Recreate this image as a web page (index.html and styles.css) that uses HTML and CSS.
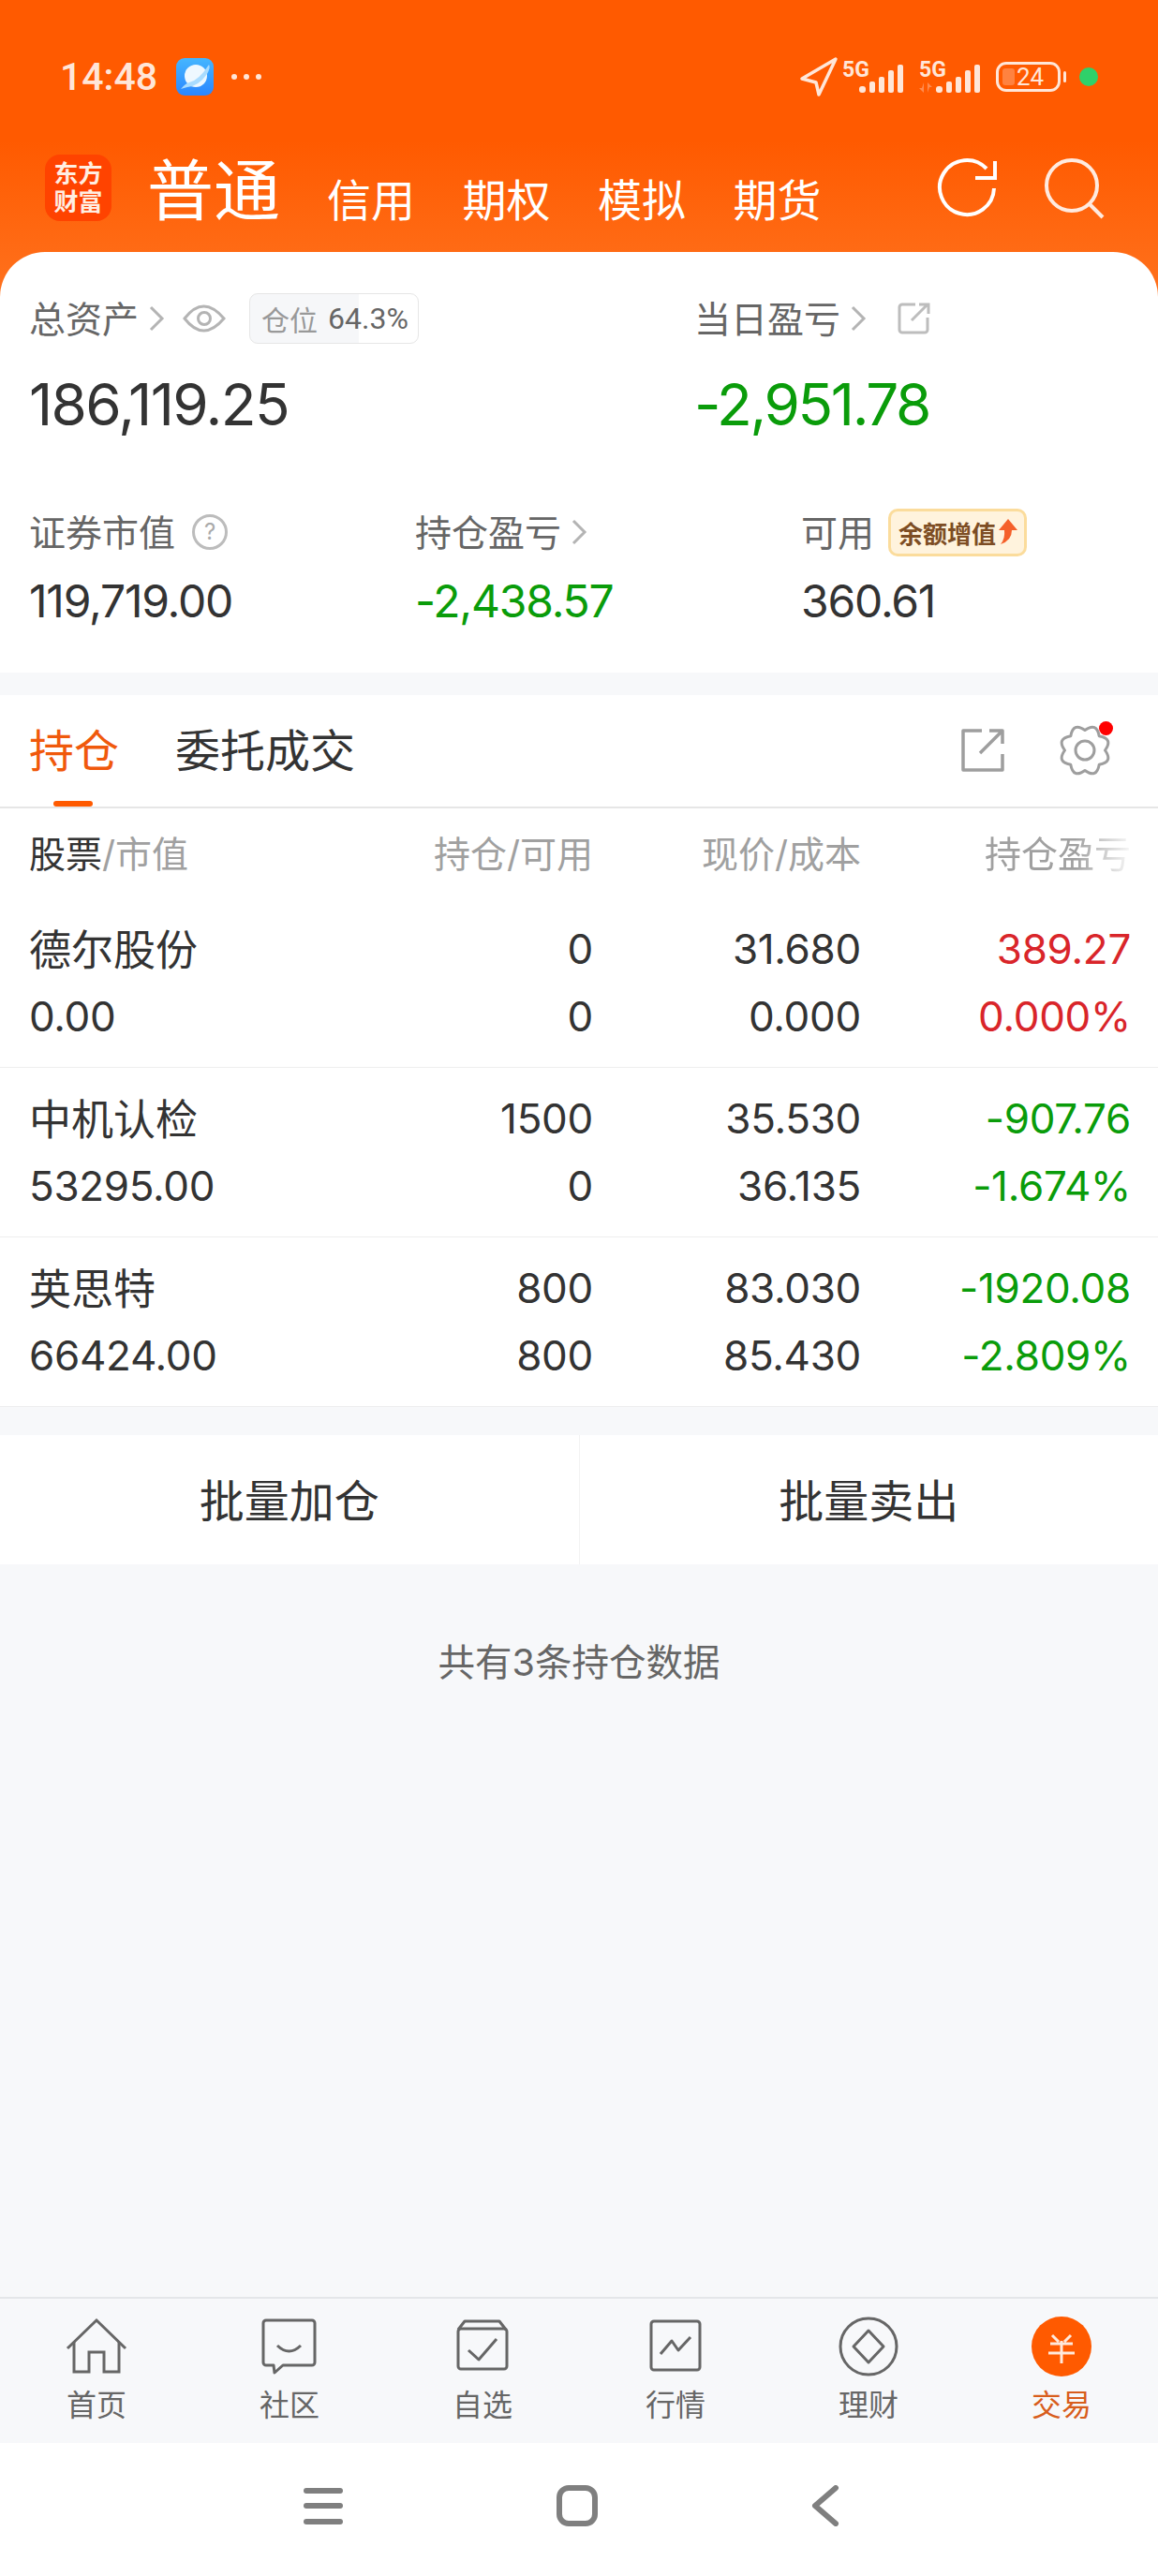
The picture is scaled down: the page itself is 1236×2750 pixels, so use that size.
FILE: index.html
```html
<!DOCTYPE html>
<html lang="zh-CN">
<head>
  <meta charset="UTF-8" />
  <meta name="viewport" content="width=device-width, initial-scale=1" />
  <title>交易 - 持仓</title>
  <link rel="stylesheet" href="styles.css">
</head>
<body>
<div class="app">

  <div class="top">
    <div class="statusbar">
      <div class="status-left">
        <span class="time">14:48</span>
        <svg class="app-dot" width="40" height="40" viewBox="0 0 40 40">
          <defs>
            <linearGradient id="blue" x1="0" y1="0" x2="0" y2="1">
              <stop offset="0" stop-color="#45b6ff"/>
              <stop offset="1" stop-color="#2a86ff"/>
            </linearGradient>
          </defs>
          <rect width="40" height="40" rx="9" fill="url(#blue)"/>
          <circle cx="21" cy="19" r="12" fill="#eef8ff"/>
          <path d="M5 33 Q10 27 14 26 Q24 24 35 7 Q37 10 33 17 Q24 30 12 31 Q8 32 5 33Z" fill="#a9dcff"/>
        </svg>
        <span class="more-dots"><i></i><i></i><i></i></span>
      </div>
      <div class="status-right">
        <svg width="42" height="44" viewBox="0 0 42 44"><path d="M39 3 L3 24 L18 28 L21 41 Z" fill="none" stroke="#ffe6d8" stroke-width="3.5" stroke-linejoin="round"/></svg>
        <div class="signal">
          <span class="five-g">5G</span>
          <svg class="bars" width="48" height="30" viewBox="0 0 48 30"><rect x="0" y="23" width="7" height="7" rx="3"/><rect x="11" y="18" width="6" height="12" rx="2"/><rect x="21" y="13" width="6" height="17" rx="2"/><rect x="31" y="6" width="6" height="24" rx="2"/><rect x="41" y="0" width="6" height="30" rx="2"/></svg>
        </div>
        <div class="signal">
          <span class="five-g">5G</span>
          <svg class="data-arrows" width="14" height="11" viewBox="0 0 14 11"><path d="M5 0 V11 L0 6 H3Z M9 11 V0 L14 5 H11Z" fill="#ff8c50"/></svg>
          <svg class="bars" width="48" height="30" viewBox="0 0 48 30"><rect x="0" y="23" width="7" height="7" rx="3"/><rect x="11" y="18" width="6" height="12" rx="2"/><rect x="21" y="13" width="6" height="17" rx="2"/><rect x="31" y="6" width="6" height="24" rx="2"/><rect x="41" y="0" width="6" height="30" rx="2"/></svg>
        </div>
        <div class="battery"><i class="battery-fill"></i><span>24</span></div>
        <i class="battery-nub"></i>
        <i class="green-dot"></i>
      </div>
    </div>

    <nav class="topnav">
      <div class="logo">东方<br>财富</div>
      <span class="nav-main">普通</span>
      <span class="nav-item">信用</span>
      <span class="nav-item">期权</span>
      <span class="nav-item">模拟</span>
      <span class="nav-item">期货</span>
      <div class="nav-icons">
        <svg width="70" height="70" viewBox="0 0 70 70" fill="none" stroke="#fff" stroke-width="4"><path d="M63 35 A29 29 0 1 1 55 14"/><path d="M64 6 V24 H43"/></svg>
        <svg width="70" height="70" viewBox="0 0 70 70" fill="none" stroke="#ffeadf" stroke-width="4"><circle cx="33" cy="32" r="27"/><path d="M52 52 L66 66"/></svg>
      </div>
    </nav>

    <section class="panel">
      <div class="stats-row">
        <div>
          <div class="stat-label">总资产
            <svg class="chev" width="18" height="30" viewBox="0 0 18 30"><path d="M3 3 L15 15 L3 27"/></svg>
            <svg class="eye" width="46" height="32" viewBox="0 0 46 32" fill="none" stroke="#b4b4b4" stroke-width="3"><path d="M2 16 Q22 -10 44 16 Q22 42 2 16Z"/><circle cx="23" cy="16" r="6.5"/></svg>
            <span class="pill"><em>仓位</em>64.3%</span>
          </div>
          <div class="big-value">186,119.25</div>
        </div>
        <div>
          <div class="stat-label">当日盈亏
            <svg class="chev" width="18" height="30" viewBox="0 0 18 30"><path d="M3 3 L15 15 L3 27"/></svg>
            <svg class="share-small" width="36" height="36" viewBox="0 0 36 36" fill="none" stroke="#bdbdbd" stroke-width="3"><path d="M19 3 H5 a3 3 0 0 0 -3 3 V30 a3 3 0 0 0 3 3 H29 a3 3 0 0 0 3 -3 V17"/><path d="M15 20 L32 3 M23 3 H33 V13"/></svg>
          </div>
          <div class="big-value green">-2,951.78</div>
        </div>
      </div>
      <div class="stats-row-three">
        <div>
          <div class="stat-label">证券市值 <span class="help">?</span></div>
          <div class="mid-value">119,719.00</div>
        </div>
        <div>
          <div class="stat-label">持仓盈亏
            <svg class="chev" width="18" height="30" viewBox="0 0 18 30"><path d="M3 3 L15 15 L3 27"/></svg>
          </div>
          <div class="mid-value green">-2,438.57</div>
        </div>
        <div>
          <div class="stat-label">可用
            <span class="badge">余额增值<svg width="22" height="30" viewBox="0 0 22 30"><path d="M11 1 L21 13 H15 Q15 24 3 28 Q8 22 7 13 H1Z" fill="#f5602a"/></svg></span>
          </div>
          <div class="mid-value">360.61</div>
        </div>
      </div>
    </section>
  </div>

  <section class="holdings">
    <div class="tabs">
      <span class="tab active">持仓</span>
      <span class="tab">委托成交</span>
      <div class="tab-icons">
        <svg width="46" height="46" viewBox="0 0 46 46" fill="none" stroke="#9e9e9e" stroke-width="3.5" stroke-linejoin="round"><path d="M22 2 H2 V44 H44 V27"/><path d="M20 26 L44 2 M30 2 H44 V16"/></svg>
        <div class="gear">
          <svg width="54" height="54" viewBox="0 0 54 54" fill="none" stroke="#9e9e9e" stroke-width="3" stroke-linejoin="round"><path d="M27 5.5 Q39.6 -3.5 42.2 11.8 Q57.5 14.4 48.5 27 Q57.5 39.6 42.2 42.2 Q39.6 57.5 27 48.5 Q14.4 57.5 11.8 42.2 Q-3.5 39.6 5.5 27 Q-3.5 14.4 11.8 11.8 Q14.4 -3.5 27 5.5Z"/><circle cx="27" cy="27" r="10"/></svg>
          <i class="red-dot"></i>
        </div>
      </div>
    </div>

    <div class="table-head">
      <span><b>股票</b>/市值</span>
      <span class="num">持仓/可用</span>
      <span class="num">现价/成本</span>
      <span class="num"><span class="fade">持仓盈亏</span></span>
    </div>

    <div class="stock">
      <span class="name">德尔股份</span><span class="num">0</span><span class="num">31.680</span><span class="num red">389.27</span>
      <span>0.00</span><span class="num">0</span><span class="num">0.000</span><span class="num red">0.000%</span>
    </div>
    <div class="stock">
      <span class="name">中机认检</span><span class="num">1500</span><span class="num">35.530</span><span class="num green">-907.76</span>
      <span>53295.00</span><span class="num">0</span><span class="num">36.135</span><span class="num green">-1.674%</span>
    </div>
    <div class="stock">
      <span class="name">英思特</span><span class="num">800</span><span class="num">83.030</span><span class="num green">-1920.08</span>
      <span>66424.00</span><span class="num">800</span><span class="num">85.430</span><span class="num green">-2.809%</span>
    </div>
  </section>

  <div class="batch">
    <button>批量加仓</button>
    <button>批量卖出</button>
  </div>

  <p class="summary">共有3条持仓数据</p>

  <footer class="tabbar">
    <div class="tabbar-item">
      <svg width="66" height="60" viewBox="0 0 66 60" fill="none" stroke="#666" stroke-width="3"><path d="M2 32 L33 2 L64 32"/><path d="M9 25 V57 H25 V36 H41 V57 H57 V25"/></svg>
      <span>首页</span>
    </div>
    <div class="tabbar-item">
      <svg width="60" height="60" viewBox="0 0 60 60" fill="none" stroke="#666" stroke-width="3" stroke-linejoin="round"><path d="M5 2 H54 a3 3 0 0 1 3 3 V47 a3 3 0 0 1 -3 3 H23 L14 58 L13 50 H5 a3 3 0 0 1 -3 -3 V5 a3 3 0 0 1 3 -3Z"/><path d="M17 29 Q29.5 41 42 29"/></svg>
      <span>社区</span>
    </div>
    <div class="tabbar-item">
      <svg width="58" height="60" viewBox="0 0 58 60" fill="none" stroke="#666" stroke-width="3" stroke-linejoin="round"><rect x="3" y="11" width="52" height="43" rx="3"/><path d="M3 12 L10 3 H47 L54 12"/><path d="M14 34 L25 44 L44 22"/></svg>
      <span>自选</span>
    </div>
    <div class="tabbar-item">
      <svg width="58" height="60" viewBox="0 0 58 60" fill="none" stroke="#666" stroke-width="3" stroke-linejoin="round"><rect x="3" y="3" width="52" height="52" rx="3"/><path d="M13 38 L25 24 L32 34 L45 20"/></svg>
      <span>行情</span>
    </div>
    <div class="tabbar-item">
      <svg width="64" height="64" viewBox="0 0 64 64" fill="none" stroke="#666" stroke-width="3" stroke-linejoin="round"><circle cx="32" cy="32" r="30"/><path d="M32 15 L48 32 L32 49 L16 32Z"/></svg>
      <span>理财</span>
    </div>
    <div class="tabbar-item active">
      <svg width="64" height="64" viewBox="0 0 64 64" fill="none"><circle cx="32" cy="32" r="32" fill="#ff5a00"/><path d="M22 20 L29 27 M42 20 L35 27 M20 29 H44 M18 39 H46 M32 26 V50" stroke="#ffe9dc" stroke-width="3"/></svg>
      <span>交易</span>
    </div>
  </footer>

  <div class="sysnav">
    <svg width="42" height="42" viewBox="0 0 42 42" fill="#7f7f7f"><rect y="2" width="42" height="6" rx="3"/><rect y="18" width="42" height="6" rx="3"/><rect y="35" width="42" height="6" rx="3"/></svg>
    <svg width="44" height="44" viewBox="0 0 44 44" fill="none" stroke="#7f7f7f" stroke-width="6"><rect x="3" y="3" width="38" height="38" rx="10"/></svg>
    <svg width="30" height="44" viewBox="0 0 30 44" fill="none" stroke="#7f7f7f" stroke-width="6" stroke-linecap="round" stroke-linejoin="round"><path d="M26 3 L4 22 L26 41"/></svg>
  </div>

</div>
</body>
</html>
```

FILE: styles.css
```css
/* Reset */
* {
  box-sizing: border-box;
}
body {
  margin: 0;
  background: #f7f8fa;
  color: #333;
  font-family: Inter, "Noto Sans CJK SC", sans-serif;
}
i {
  display: block;
}
.green {
  color: #0a9c0a;
}
.red {
  color: #d9252a;
}

.app {
  display: flex;
  flex-direction: column;
  height: 2750px;
  overflow: hidden;
}

/* Top orange area */
.top {
  background: linear-gradient(#ff5a00 150px, #ff721e 320px) no-repeat;
  background-size: 100% 320px;
}
.statusbar {
  display: flex;
  justify-content: space-between;
  align-items: center;
  height: 164px;
  padding: 0 64px;
}
.status-left,
.status-right {
  display: flex;
  align-items: center;
}
.time {
  font-family: Roboto, sans-serif;
  font-size: 41px;
  font-weight: 500;
  color: #ffe6d8;
}
.app-dot {
  margin-left: 20px;
}
.more-dots {
  display: flex;
  gap: 7px;
  margin-left: 19px;
}
.more-dots i {
  width: 6px;
  height: 6px;
  border-radius: 50%;
  background: #ffe6d8;
}
.signal {
  display: grid;
  width: 66px;
  height: 33px;
  margin-left: 16px;
}
svg + .signal {
  margin-left: 4px;
}
.signal > * {
  grid-area: 1 / 1;
}
.five-g {
  font-family: Roboto, sans-serif;
  font-size: 23px;
  line-height: 17px;
  font-weight: 700;
  color: #ffe6d8;
}
.data-arrows {
  justify-self: start;
  align-self: end;
}
.bars {
  fill: #ffe6d8;
  justify-self: end;
  align-self: end;
}
.battery {
  position: relative;
  width: 69px;
  height: 32px;
  margin-left: 16px;
  border: 3px solid #ffe6d8;
  border-radius: 11px;
  text-align: center;
  font-family: Roboto, sans-serif;
  font-size: 26px;
  line-height: 26px;
  color: #ffe6d8;
}
.battery span {
  position: relative;
  padding-left: 4px;
}
.battery-fill {
  position: absolute;
  left: 4px;
  top: 4px;
  bottom: 4px;
  width: 13px;
  border-radius: 3px;
  background: #ff8240;
}
.battery-nub {
  width: 3px;
  height: 12px;
  margin-left: 3px;
  border-radius: 2px;
  background: #ffe6d8;
}
.green-dot {
  width: 20px;
  height: 20px;
  margin-left: 14px;
  border-radius: 50%;
  background: #2fd16a;
}

.topnav {
  display: flex;
  align-items: flex-end;
  height: 105px;
  padding: 0 55px 33px 48px;
  color: #fff;
}
.logo {
  width: 71px;
  height: 71px;
  padding-top: 6px;
  border-radius: 16px;
  background: #ff4300;
  text-align: center;
  font-size: 26px;
  font-weight: 700;
  line-height: 30px;
  color: #ffeee2;
}
.nav-main {
  margin-left: 38px;
  margin-bottom: -3px;
  font-size: 71px;
  line-height: 72px;
}
.nav-item {
  margin-left: 50.5px;
  margin-bottom: -3px;
  font-size: 47px;
  line-height: 50px;
}
.nav-main + .nav-item {
  margin-left: 50px;
}
.nav-icons {
  display: flex;
  gap: 43px;
  margin-left: auto;
  align-self: flex-end;
}

/* Account panel */
.panel {
  padding: 44px 0 41px;
  background: #fff;
  border-radius: 48px 48px 0 0;
}
.stats-row {
  display: grid;
  grid-template-columns: 710px 1fr;
  padding-left: 31px;
}
.stats-row-three {
  display: grid;
  grid-template-columns: 412px 412px 1fr;
  margin-top: 69px;
  padding-left: 31px;
}
.stat-label {
  display: flex;
  align-items: center;
  height: 54px;
  padding-bottom: 4px;
  font-size: 39px;
  color: #666;
}
.stat-label > * {
  margin-top: 4px;
}
.chev {
  margin-left: 10px;
  fill: none;
  stroke: #b4b4b4;
  stroke-width: 3;
}
.eye {
  margin-left: 19px;
}
.share-small {
  margin-left: 33px;
}
.pill {
  display: flex;
  align-items: center;
  height: 54px;
  margin-left: 25px;
  padding: 0 10px 0 12px;
  border: 1px solid #e6e6e6;
  border-radius: 9px;
  background: linear-gradient(to right, #f6f7f9 116px, #fff 116px);
  font-family: Roboto, "Noto Sans CJK SC", sans-serif;
  font-size: 32px;
  color: #666;
}
.pill em {
  margin-right: 11px;
  font-style: normal;
  font-size: 30px;
  color: #999;
}
.big-value {
  margin-top: 25px;
  font-size: 62px;
  line-height: 80px;
  letter-spacing: -1.6px;
}
.big-value.green {
  letter-spacing: -2.4px;
}
.mid-value {
  margin-top: 12px;
  font-size: 48px;
  line-height: 70px;
  letter-spacing: -1.2px;
}
.help {
  width: 38px;
  height: 38px;
  margin-left: 18px;
  border: 3px solid #bcbcbc;
  border-radius: 50%;
  text-align: center;
  font-size: 24px;
  line-height: 32px;
  color: #aaa;
}
.badge {
  display: flex;
  align-items: center;
  gap: 2px;
  height: 51px;
  margin-left: 15px;
  padding: 0 6px 0 8px;
  border: 3px solid #fbdc9c;
  border-radius: 10px;
  background: #fff3dd;
  font-size: 26px;
  font-weight: 700;
  color: #7d4d24;
}

/* Holdings table */
.holdings {
  margin-top: 24px;
  background: #fff;
  border-bottom: 1px solid #eee;
}
.tabs {
  display: flex;
  align-items: center;
  height: 121px;
  padding: 0 51px 1px 31px;
  border-bottom: 2px solid #e6e6e6;
}
.tab {
  position: relative;
  font-size: 48px;
  line-height: 119px;
}
.tab + .tab {
  margin-left: 60px;
}
.tab.active {
  color: #f0590c;
}
.tab.active::after {
  content: "";
  position: absolute;
  left: 26px;
  bottom: 0;
  width: 42px;
  height: 6px;
  border-radius: 3px;
  background: #ff5a00;
}
.tab-icons {
  display: flex;
  align-items: center;
  gap: 59px;
  margin-left: auto;
}
.gear {
  position: relative;
  height: 54px;
}
.red-dot {
  position: absolute;
  top: -4px;
  right: -3px;
  width: 15px;
  height: 15px;
  border-radius: 50%;
  background: #f00;
}

.table-head,
.stock {
  display: grid;
  grid-template-columns: 301px 301px 286px 288px;
  padding-left: 31px;
}
.table-head {
  align-items: center;
  height: 96px;
  padding-bottom: 4px;
  font-size: 39px;
  color: #a0a0a0;
}
.table-head b {
  font-weight: 400;
  color: #333;
}
.fade {
  display: inline-block;
  width: 156px;
  white-space: nowrap;
  -webkit-mask-image: linear-gradient(to right, #000 62%, rgba(0,0,0,0.08) 100%);
  mask-image: linear-gradient(to right, #000 62%, rgba(0,0,0,0.08) 100%);
}
.stock {
  padding-top: 18px;
  padding-bottom: 18px;
  grid-auto-rows: 72px;
  align-items: center;
  border-bottom: 1px solid #eee;
  font-size: 44px;
  letter-spacing: -0.3px;
}
.stock:last-child {
  border-bottom: none;
}
.stock .name {
  padding-bottom: 4px;
  font-size: 45px;
  letter-spacing: 0;
}
.num {
  text-align: right;
}

/* Batch buttons */
.batch {
  display: flex;
  height: 138px;
  margin-top: 30px;
  background: #fff;
}
.batch button {
  flex: 1;
  padding: 0 0 4px;
  border: none;
  background: none;
  font-family: inherit;
  font-size: 48px;
  color: #333;
}
.batch button + button {
  border-left: 1px solid #f2f2f2;
}

.summary {
  margin: 75px 0 0;
  text-align: center;
  font-size: 39.5px;
  line-height: 60px;
  color: #666;
}

/* Bottom tabs */
.tabbar {
  display: flex;
  height: 156px;
  margin-top: auto;
  border-top: 2px solid #e4e6e9;
  background: #f7f8fa;
}
.tabbar-item {
  flex: 1;
  display: flex;
  flex-direction: column;
  align-items: center;
  color: #666;
  font-size: 32px;
}
.tabbar-item svg {
  height: 64px;
  margin-top: 19px;
}
.tabbar-item span {
  margin-top: 8px;
  line-height: 46px;
}
.tabbar-item.active span {
  color: #d85d1c;
}

.sysnav {
  display: flex;
  align-items: center;
  gap: 228px;
  height: 142px;
  padding: 0 0 8px 324px;
  background: #fff;
}
```
